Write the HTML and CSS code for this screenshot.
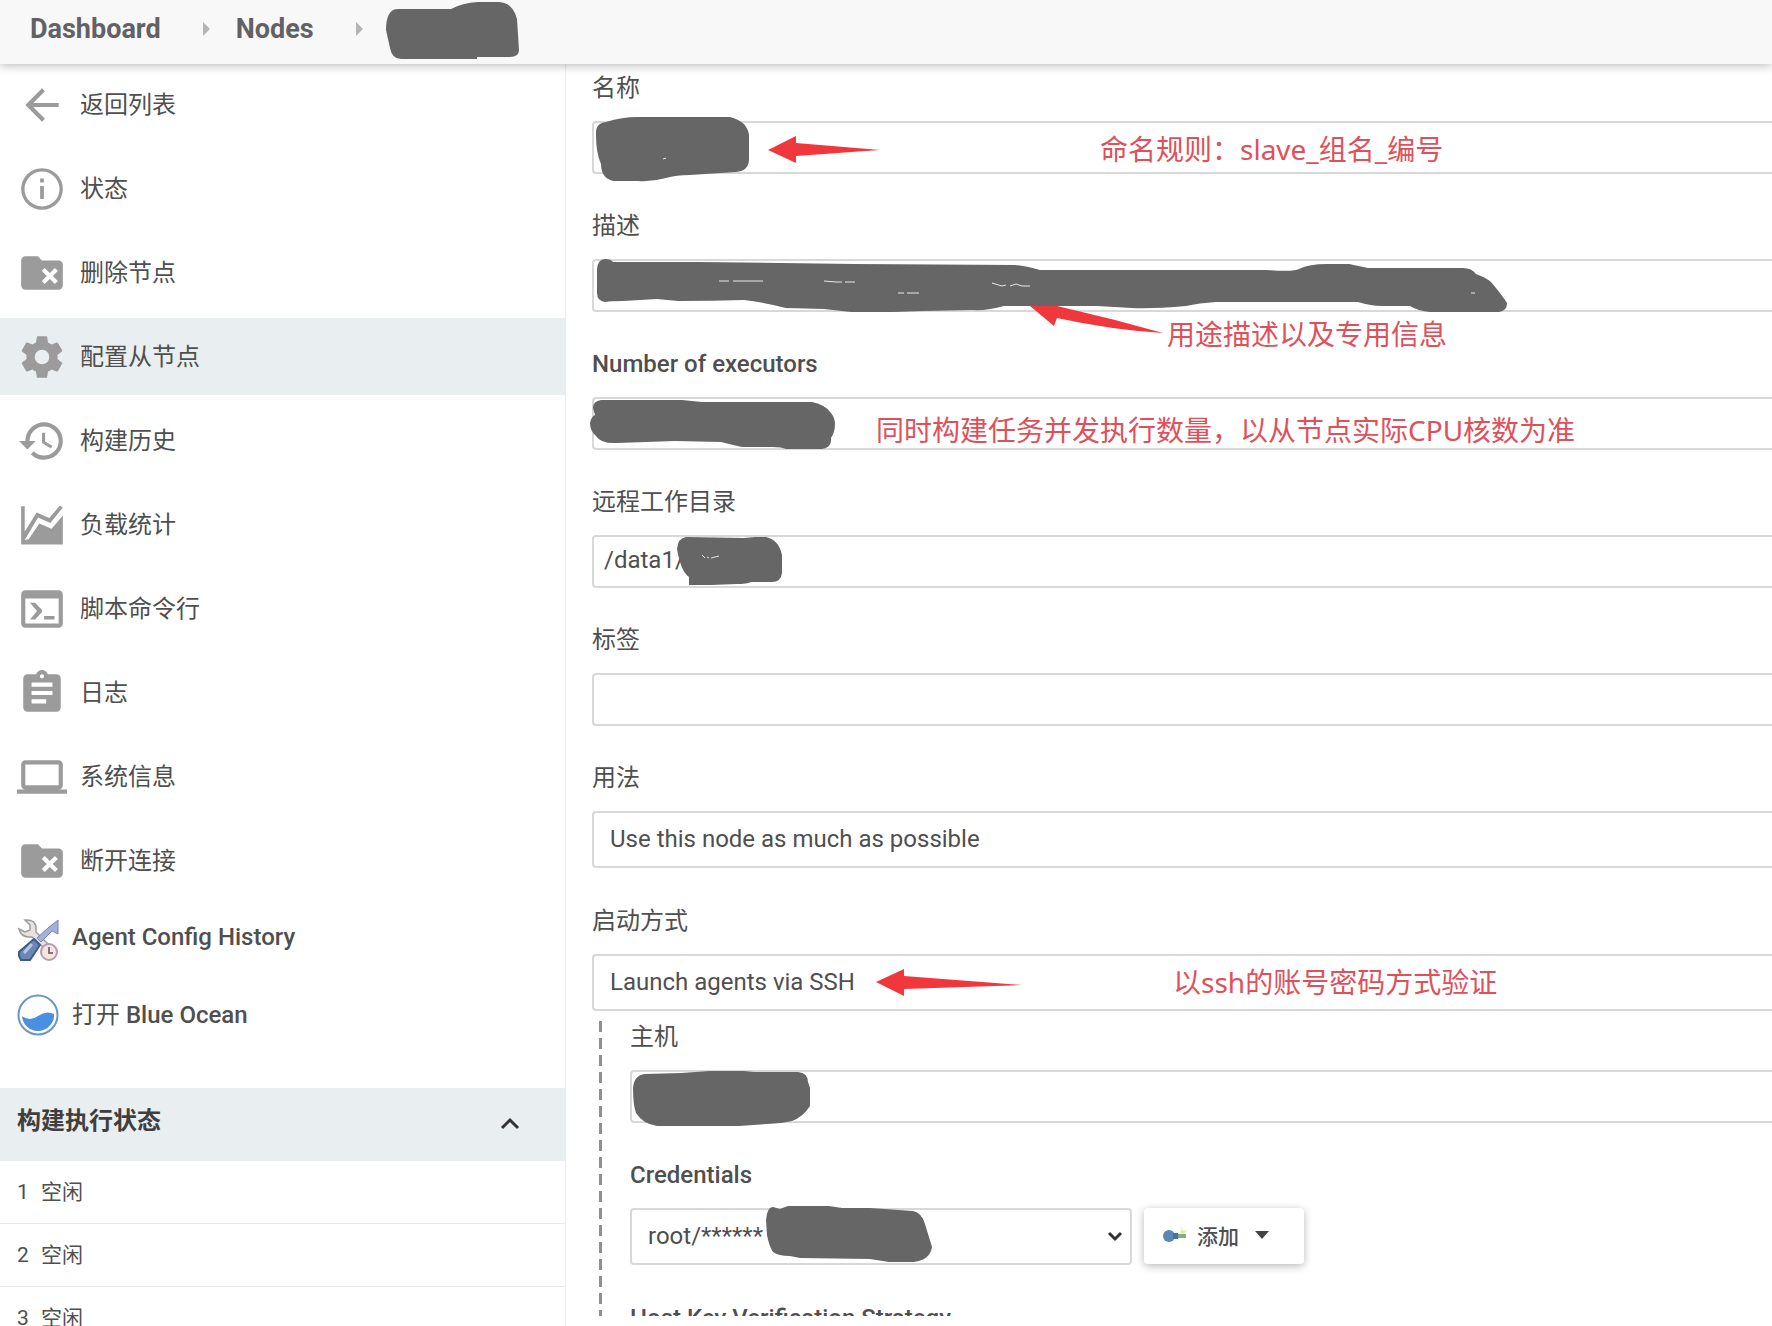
FILE: index.html
```html
<!DOCTYPE html>
<html lang="zh-cn">
<head>
	<meta charset="UTF-8">
	<title>Nodes</title>
	<link rel="stylesheet" href="styles.css">
</head>
<body>
	<header class="header">
		<nav class="crumbs">
			<a href="#">Dashboard</a>
			<svg class="sep" width="7" height="14" viewBox="0 0 7 14"><path d="M0 0L7 7L0 14Z"/></svg>
			<a href="#">Nodes</a>
			<svg class="sep" width="7" height="14" viewBox="0 0 7 14"><path d="M0 0L7 7L0 14Z"/></svg>
			<svg class="crumb-mask" width="134" height="58" viewBox="390 0 134 58"><path d="M390 30Q390 9 402 9H455Q466 3 482 2H503Q517 3 521 19L523 50Q523 57 514 57H481V59H405Q396 59 394 48Z"/></svg>
		</nav>
	</header>
	<div class="wrap">
		<aside class="side">
			<ul class="menu">
				<li><a href="#"><svg viewBox="0 0 24 24"><path d="M20 11H7.8l5.6-5.6L12 4l-8 8 8 8 1.4-1.4L7.8 13H20z"/></svg><span>返回列表</span></a></li>
				<li><a href="#"><svg viewBox="0 0 24 24"><circle class="line" cx="12" cy="12" r="9.2"/><path d="M11.1 7h1.8v1.9h-1.8zM11.1 10.6h1.8v6.2h-1.8z"/></svg><span>状态</span></a></li>
				<li><a href="#"><svg viewBox="0 0 24 24"><path d="M10 4H4a2 2 0 0 0-2 2v12a2 2 0 0 0 2 2h16a2 2 0 0 0 2-2V8a2 2 0 0 0-2-2h-8z"/><path class="cut" d="M12.6 10.3L18.9 16.6M18.9 10.3L12.6 16.6"/></svg><span>删除节点</span></a></li>
				<li class="active"><a href="#"><svg viewBox="0 0 24 24"><path d="M12 15.5A3.5 3.5 0 0 1 8.5 12 3.5 3.5 0 0 1 12 8.5a3.5 3.5 0 0 1 3.5 3.5 3.5 3.5 0 0 1-3.5 3.5m7.43-2.53c.04-.32.07-.64.07-.97s-.03-.66-.07-1l2.11-1.63c.19-.15.24-.42.12-.64l-2-3.46c-.12-.22-.39-.31-.61-.22l-2.49 1c-.52-.39-1.06-.73-1.69-.98l-.37-2.65A.506.506 0 0 0 14 2h-4c-.25 0-.46.18-.5.42l-.37 2.65c-.63.25-1.17.59-1.69.98l-2.49-1c-.22-.09-.49 0-.61.22l-2 3.46c-.13.22-.07.49.12.64L4.57 11c-.04.34-.07.67-.07 1s.03.65.07.97l-2.11 1.66c-.19.15-.25.42-.12.64l2 3.46c.12.22.39.3.61.22l2.49-1.01c.52.4 1.06.74 1.69.99l.37 2.65c.04.24.25.42.5.42h4c.25 0 .46-.18.5-.42l.37-2.65c.63-.26 1.17-.59 1.69-.99l2.49 1.01c.22.08.49 0 .61-.22l2-3.46c.12-.22.07-.49-.12-.64z"/></svg><span>配置从节点</span></a></li>
				<li><a href="#"><svg viewBox="0 0 24 24"><path d="M13.5 8H12v5l4.28 2.54.72-1.21-3.5-2.08zM13 3a9 9 0 0 0-9 9H1l3.96 4.03L9 12H6a7 7 0 0 1 7-7 7 7 0 0 1 7 7 7 7 0 0 1-7 7c-1.93 0-3.68-.79-4.94-2.06l-1.42 1.42A8.96 8.96 0 0 0 13 21a9 9 0 0 0 9-9 9 9 0 0 0-9-9"/></svg><span>构建历史</span></a></li>
				<li><a href="#"><svg viewBox="0 0 24 24"><path d="M2 3h1.7v12.2L9.4 6l6.1 2.7L20.6 2.6 22 3.6 16 11 10.1 8.4 3.7 19.2 5.6 18.9 10.7 11.3 16.6 13.8 22 7.4V21.4H2z"/></svg><span>负载统计</span></a></li>
				<li><a href="#"><svg viewBox="0 0 24 24"><path d="M20 19V7H4v12zM20 3a2 2 0 0 1 2 2v14a2 2 0 0 1-2 2H4a2 2 0 0 1-2-2V5a2 2 0 0 1 2-2zM13 17v-1.6h5V17zM9.6 13l-3.4-4h2.5l3.2 3.4q.5.6 0 1.2L8.7 17H6.2z"/></svg><span>脚本命令行</span></a></li>
				<li><a href="#"><svg viewBox="0 0 24 24"><path d="M19 3h-4.18C14.4 1.84 13.3 1 12 1s-2.4.84-2.82 2H5a2 2 0 0 0-2 2v14a2 2 0 0 0 2 2h14a2 2 0 0 0 2-2V5a2 2 0 0 0-2-2zm-7 0a1 1 0 1 1 0 2 1 1 0 0 1 0-2zm2 14H7v-2h7zm3-4H7v-2h10zm0-4H7V7h10z"/></svg><span>日志</span></a></li>
				<li><a href="#"><svg viewBox="0 0 24 24"><path d="M20 18a2 2 0 0 0 2-2V6a2 2 0 0 0-2-2H4a2 2 0 0 0-2 2v10a2 2 0 0 0 2 2H0v2h24v-2zM4 6h16v10H4z"/></svg><span>系统信息</span></a></li>
				<li><a href="#"><svg viewBox="0 0 24 24"><path d="M10 4H4a2 2 0 0 0-2 2v12a2 2 0 0 0 2 2h16a2 2 0 0 0 2-2V8a2 2 0 0 0-2-2h-8z"/><path class="cut" d="M12.6 10.3L18.9 16.6M18.9 10.3L12.6 16.6"/></svg><span>断开连接</span></a></li>
			</ul>
			<ul class="menu plugins">
				<li><a href="#">
					<svg viewBox="0 0 42 42">
						<path d="M8 1Q18 0 19 8V13L31 25L27 29L15 18Q4 19 2 10L8 13L13 11V6Z" fill="#e6e3de" stroke="#a09c9c" stroke-width="1.5"/>
						<path d="M41 1V15L35 12L24 23L20 19L31 9Z" fill="#a3b0da" stroke="#7a84b4"/>
						<path d="M17 20L23 26L13 41H4L2 37V33Z" fill="#6d87b5" stroke="#3f5b8c" stroke-width="2"/>
						<path d="M15 25L7 34" stroke="#b9c9e4" stroke-width="3"/>
						<circle cx="32" cy="33" r="8" fill="#f5e6dc" stroke="#b69ab8" stroke-width="2"/>
						<path d="M32 28V34H36" fill="none" stroke="#8b6c88" stroke-width="2"/>
					</svg><span class="en">Agent Config History</span></a></li>
				<li><a href="#">
					<svg viewBox="0 0 42 42">
						<circle cx="21" cy="21" r="19.5" fill="#fff" stroke="#6d97bd" stroke-width="2"/>
						<path d="M5 22Q13 28 21 22Q29 16 37 20A16 16 0 0 1 5 22Z" fill="#4a90e2"/>
					</svg><span>打开 <b class="en">Blue Ocean</b></span></a></li>
			</ul>
			<section class="executors">
				<div class="exec-head">
					<h2>构建执行状态</h2>
					<button type="button" aria-label="收起"><svg width="20" height="13" viewBox="0 0 20 13"><path d="M2 11L10 3L18 11"/></svg></button>
				</div>
				<ol>
					<li><span>1</span>空闲</li>
					<li><span>2</span>空闲</li>
					<li><span>3</span>空闲</li>
				</ol>
			</section>
		</aside>
		<main class="main">
			<form>
				<div class="field">
					<label for="name">名称</label>
					<div class="control">
						<input type="text" id="name">
						<svg class="marks">
							<path class="arrow" d="M176 29L204 15V22L288 29L204 35V42Z"/>
							<path d="M4 14Q3 2 14 1Q30 -4 45 -4H138Q155 0 157 14V38Q157 50 144 51L98 54Q84 54 74 57Q60 61 46 60H21Q9 57 9 43Q4 32 4 14Z"/>
							<path class="gap" d="M71 38l3 -1"/>
						</svg>
						<span class="note note-name">命名规则：slave_组名_编号</span>
					</div>
				</div>
				<div class="field">
					<label for="desc">描述</label>
					<div class="control">
						<input type="text" id="desc">
						<svg class="marks">
							<path class="arrow" d="M438 47L461 46L523 61L571 74Q520 71 465 59L462 67Z"/>
							<path d="M5 10Q6 0 13 0Q19 0 21 3H106L263 5L423 6Q434 7 448 11H675Q702 13 707 10Q717 5 735 5H757L776 9H871Q880 9 884 15Q893 18 899 23Q910 36 915 44Q915 52 907 53H838Q826 52 818 47H790Q779 47 766 43L624 43Q607 44 594 47Q560 50 540 49L505 47H412Q395 52 380 51L331 52L301 53H259L232 50L194 49Q170 43 152 41Q120 42 86 42L65 40L31 42Q20 42 13 43Q5 42 5 34Z"/>
							<path class="gap" d="M127 22l10 0M141 22l16 0l14 0M232 22l12 1l6 0M253 23l10 0M306 34l6 0M315 34l12 0M400 24l10 3l4 -1M418 27l6 -2l6 2l8 0M879 34l4 0"/>
						</svg>
						<span class="note note-desc">用途描述以及专用信息</span>
					</div>
				</div>
				<div class="field">
					<label class="en" for="executors">Number of executors</label>
					<div class="control">
						<input type="text" id="executors">
						<svg class="marks">
							<path d="M1 11Q1 4 9 3H90L110 5H220Q234 8 239 16Q243 21 243 27Q243 35 239 41Q240 51 230 52H194Q190 50 180 50H150Q141 48 129 45L83 44L25 46Q9 47 4 39Q-2 34 -2 26Q-1 20 3 18Z"/>
						</svg>
						<span class="note note-executors">同时构建任务并发执行数量，以从节点实际CPU核数为准</span>
					</div>
				</div>
				<div class="field">
					<label for="remote">远程工作目录</label>
					<div class="control">
						<input type="text" id="remote" value="/data1/">
						<svg class="marks">
							<path d="M85 14Q86 3 94 2L152 3L163 2H174Q187 5 190 20V38Q189 47 180 47H159Q155 49 145 49L119 50H97V42Q89 37 85 14Z"/>
							<path class="gap" d="M110 20l3 3M115 22l2 1M119 23l8 -2"/>
						</svg>
					</div>
				</div>
				<div class="field">
					<label for="labels">标签</label>
					<div class="control">
						<input type="text" id="labels">
					</div>
				</div>
				<div class="field">
					<label for="usage">用法</label>
					<div class="control">
						<select id="usage">
							<option>Use this node as much as possible</option>
						</select>
					</div>
				</div>
				<div class="field">
					<label for="launch">启动方式</label>
					<div class="control">
						<select id="launch">
							<option>Launch agents via SSH</option>
						</select>
						<svg class="marks">
							<path class="arrow" d="M284 28L312 15V22L430 31L312 35V42Z"/>
						</svg>
						<span class="note note-launch">以ssh的账号密码方式验证</span>
					</div>
				</div>
				<div class="nested">
					<div class="field">
						<label for="host">主机</label>
						<div class="control">
							<input type="text" id="host">
							<svg class="marks">
								<path d="M3 18Q4 5 15 4L51 3L80 1H114L124 2H168Q178 3 178 12L180 18V36Q173 47 162 51Q150 54 137 54L109 56H27Q13 54 6 43Q3 35 3 18Z"/>
							</svg>
						</div>
					</div>
					<div class="field">
						<label class="en" for="credentials">Credentials</label>
						<div class="row">
							<div class="control">
								<select id="credentials">
									<option>root/******</option>
								</select>
								<svg class="chevron" width="16" height="12" viewBox="0 0 16 12"><path d="M2 3L8 9L14 3"/></svg>
								<svg class="marks">
									<path d="M136 12Q137 -1 143 -1L150 1L158 -2H199L212 0H240L283 3Q292 5 295 16L302 39Q300 52 284 54H259L240 51L170 50L160 48Q148 48 143 44Q139 38 137 27Z"/>
								</svg>
							</div>
							<button type="button" class="add">
								<svg width="24" height="20" viewBox="0 0 24 20">
									<path d="M9 9H23V13H9Z" fill="#7fae7f"/>
									<circle cx="6" cy="11" r="6" fill="#5b86b8"/>
									<path d="M10 8H15V14H10Z" fill="#4a6fa5"/>
									<path d="M17 8L19 2L20 6L24 5L21 9Z" fill="#e8ec9a"/>
								</svg>
								添加
								<svg class="caret" width="14" height="8" viewBox="0 0 14 8"><path d="M0 0H14L7 8Z" fill="#444"/></svg>
							</button>
						</div>
					</div>
					<div class="field">
						<label class="en" for="strategy">Host Key Verification Strategy</label>
						<div class="control">
							<select id="strategy"></select>
						</div>
					</div>
				</div>
			</form>
		</main>
	</div>
</body>
</html>
```
FILE: styles.css
```css
* { box-sizing: border-box; }
html, body {
	margin: 0;
	padding: 0;
	background: #fff;
}
body {
	display: flex;
	flex-direction: column;
	height: 100vh;
	overflow: hidden;
	font-family: Roboto, 'Noto Sans CJK SC', sans-serif;
	font-size: 24px;
	color: #4f4f4f;
}
ul, ol { list-style: none; margin: 0; padding: 0; }
a { color: inherit; text-decoration: none; }
input, select, button { font: inherit; color: inherit; }
.en { font-weight: 500; }

/* 顶部导航 */
.header {
	position: relative;
	z-index: 1;
	flex: none;
	height: 64px;
	background: #f8f8f8;
	box-shadow: 0 1px 10px rgba(0, 0, 0, .3);
}
.crumbs {
	display: flex;
	align-items: center;
	height: 58px;
	padding-left: 30px;
	font-size: 27px;
	font-weight: 700;
	color: #626266;
}
.sep { margin: 0 26px 0 42px; fill: #b5b5b5; }
.crumb-mask { margin-left: -3px; fill: #666; overflow: visible; }

.wrap {
	display: flex;
	flex: 1;
	min-height: 0;
}

/* 左侧菜单 */
.side {
	flex: none;
	width: 566px;
	padding-top: 2px;
	border-right: 1px solid #ececf0;
	overflow: hidden;
}
.menu li { margin-bottom: 7px; }
.menu a {
	display: flex;
	align-items: center;
	gap: 13px;
	height: 77px;
	padding: 0 17px;
}
.menu span { padding-bottom: 5px; }
.menu svg {
	width: 50px;
	height: 50px;
	fill: #9b9b9b;
}
.menu .line { fill: none; stroke: #9b9b9b; stroke-width: 1.6; }
.menu .cut { fill: none; stroke: #fff; stroke-width: 2; }
.menu .active { background: #e9eef0; }
.plugins { margin-top: -4px; }
.plugins li { margin: 0; }
.plugins a { height: 75px; }
.plugins svg { width: 42px; height: 42px; fill: none; }

.executors { margin-top: 36px; }
.exec-head {
	display: flex;
	align-items: center;
	justify-content: space-between;
	height: 73px;
	padding: 0 45px 12px 17px;
	background: #e9eef0;
}
.exec-head h2 { margin: 0; font-size: 24px; font-weight: 700; color: #3f3f3f; }
.exec-head button {
	padding: 10px 0 0;
	border: 0;
	background: none;
	line-height: 0;
}
.exec-head path { fill: none; stroke: #333; stroke-width: 3; }
.executors li {
	display: flex;
	height: 63px;
	padding-left: 17px;
	border-bottom: 1px solid #e8e8e8;
	font-size: 21px;
	line-height: 62px;
}
.executors span { width: 24px; }

/* 表单 */
.main {
	flex: 1;
	min-width: 0;
	margin-bottom: 10px;
	padding-left: 26px;
	overflow: hidden;
}
.field { padding-top: 9px; }
.field + .field { padding-top: 38px; }
.field label {
	display: block;
	height: 48px;
	line-height: 30px;
}
.control { position: relative; }
.control input, .control select {
	display: block;
	width: 100%;
	height: 53px;
	margin: 0 0 -1px;
	padding: 0 10px 3px;
	border: 2px solid #d8d8d8;
	border-right: 0;
	border-radius: 4px 0 0 4px;
	background: #fff;
	outline: 0;
}
.control select {
	height: 57px;
	margin: 0;
	padding: 0 16px 1px;
	appearance: none;
}
/* 虚线边 */
.nested {
	margin: 10px 0 0 7px;
	padding-left: 31px;
	background: repeating-linear-gradient(#8f8f8f 0 11px, transparent 11px 17px) left top / 3px 100% no-repeat;
}
.nested .field:first-child { padding-top: 1px; }
.row { display: flex; gap: 12px; }
.row .control { width: 502px; }
.row select { border-right: 2px solid #d8d8d8; border-radius: 4px; }
.chevron {
	position: absolute;
	right: 9px;
	top: 22px;
	fill: none;
	stroke: #333;
	stroke-width: 3;
}
.add {
	display: flex;
	align-items: center;
	gap: 10px;
	height: 56px;
	padding: 0 35px 2px 19px;
	border: 0;
	border-radius: 4px;
	background: #fff;
	box-shadow: 0 2px 8px rgba(0, 0, 0, .28);
	font-size: 21px;
	font-weight: 500;
}
.caret { margin-left: 6px; }

/* 标注：遮挡、箭头、红字 */
.marks {
	position: absolute;
	left: 0;
	top: 0;
	width: 1px;
	height: 1px;
	overflow: visible;
	fill: #666;
	pointer-events: none;
}
.marks .arrow { fill: #f0383c; }
.marks .gap { fill: none; stroke: #e8e8e8; stroke-width: 1; }
.note {
	position: absolute;
	top: 8px;
	font-family: 'Noto Sans', 'Noto Sans CJK SC', sans-serif;
	font-size: 28px;
	line-height: 40px;
	color: #e0505a;
	white-space: nowrap;
}
.note-name { left: 508px; }
.note-desc { left: 575px; top: 55px; }
.note-executors { left: 284px; top: 13px; }
.note-launch { left: 581px; }
```
